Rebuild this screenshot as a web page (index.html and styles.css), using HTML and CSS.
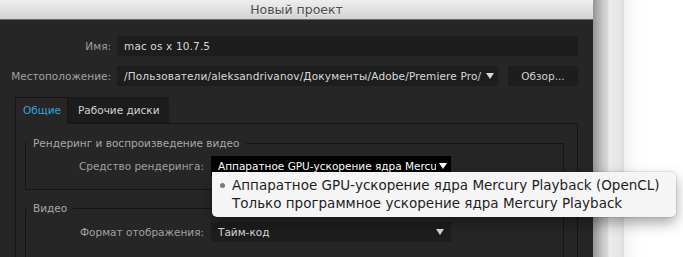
FILE: index.html
```html
<!DOCTYPE html>
<html lang="ru">
<head>
  <meta charset="UTF-8" />
  <title>Новый проект</title>
  <link rel="stylesheet" href="styles.css">
</head>
<body>
  <div class="screen">
    <div class="window">
      <div class="titlebar">Новый проект</div>
      <div class="dialog">
        <div class="row">
          <label class="field-label">Имя:</label>
          <div class="input input-name">mac os x 10.7.5</div>
        </div>
        <div class="row">
          <label class="field-label">Местоположение:</label>
          <div class="input input-path">
            <span class="clip">/Пользователи/aleksandrivanov/Документы/Adobe/Premiere Pro/</span>
            <span class="caret"></span>
          </div>
          <div class="button">Обзор...</div>
        </div>
        <div class="tabs">
          <div class="tab active">Общие</div>
          <div class="tab">Рабочие диски</div>
        </div>
        <div class="tab-panel">
          <fieldset class="group group-render">
            <legend>Рендеринг и воспроизведение видео</legend>
            <div class="group-row">
              <span class="group-label">Средство рендеринга:</span>
              <div class="select select-open">
                <span class="clip">Аппаратное GPU-ускорение ядра Mercury Playback (OpenCL)</span>
                <span class="caret caret-white"></span>
              </div>
            </div>
          </fieldset>
          <fieldset class="group group-video">
            <legend>Видео</legend>
            <div class="group-row">
              <span class="group-label">Формат отображения:</span>
              <div class="select">
                <span class="clip">Тайм-код</span>
                <span class="caret"></span>
              </div>
            </div>
          </fieldset>
        </div>
      </div>
      <div class="menu">
        <div class="menu-item checked">Аппаратное GPU-ускорение ядра Mercury Playback (OpenCL)</div>
        <div class="menu-item">Только программное ускорение ядра Mercury Playback</div>
      </div>
    </div>
    <div class="desktop"></div>
  </div>
</body>
</html>
```

FILE: styles.css
```css
* { box-sizing: border-box; margin: 0; padding: 0; }
html, body { width: 683px; height: 257px; overflow: hidden; }
body {
  font-family: 'DejaVu Sans', 'Liberation Sans', sans-serif;
  font-size: 10.5px;
  background: #fff;
}
.screen { display: flex; height: 257px; }
.window {
  position: relative;
  width: 593px; flex: none;
  display: flex; flex-direction: column;
}
.titlebar {
  height: 20px; flex: none;
  background: linear-gradient(#eeeeee, #d2d2d2);
  border-bottom: 1px solid #6b6b6b;
  border-top-right-radius: 4px;
  text-align: center; line-height: 19px;
  font-size: 12.5px; color: #4a4a4a;
  text-shadow: 0 1px 0 rgba(255,255,255,0.6);
}
.dialog {
  flex: 1;
  background: #262626;
  padding-top: 16px;
}
.row {
  display: flex; align-items: center; gap: 6px;
  height: 20px; margin-bottom: 10px;
  padding-right: 15px;
}
.field-label {
  width: 111px; flex: none;
  text-align: right; color: #a0a0a0;
}
.input {
  height: 20px; line-height: 20px;
  background: #1d1d1d; color: #dadada;
  padding: 0 7px;
  letter-spacing: 0.15px;
}
.input-name { flex: 1; }
.input-path {
  width: 381px; flex: none;
  display: flex; align-items: center;
  padding-right: 4px;
}
.clip { flex: 1; overflow: hidden; white-space: nowrap; }
.caret {
  flex: none; margin-left: 3px;
  width: 0; height: 0;
  border-left: 4.5px solid transparent;
  border-right: 4.5px solid transparent;
  border-top: 6px solid #d8d8d8;
}
.caret-white { border-top-color: #fff; }
.button {
  width: 70px; height: 20px; line-height: 20px;
  margin-left: 4px;
  background: #1d1d1d; color: #d0d0d0;
  text-align: center;
}
.tabs {
  display: flex; margin: 11px 15px 0;
  height: 26px; position: relative; z-index: 1;
}
.tab {
  line-height: 25px; padding: 0 9px 0 10px;
  color: #d4d4d4; background: #1c1c1c;
  border-top: 1px solid #1c1c1c;
}
.tab.active {
  width: 53px; padding: 0 7px;
  color: #36a3dc; background: #262626;
  border: 1px solid #151515; border-bottom: none;
  height: 27px;
}
.tab-panel {
  margin: 0 15px;
  height: 134px;
  border: 1px solid #151515; border-bottom: none;
}
.group {
  margin: 12px 13px 0 9px;
  border: 1px solid #151515;
  padding: 0;
}
.group legend {
  margin-left: 1px; padding: 0 6px;
  line-height: 14px; color: #a8a8a8;
}
.group-render { padding-bottom: 13px; }
.group-render .group-row { margin-top: 6px; }
.group-video { margin-top: 11px; border-bottom: none; height: 60px; }
.group-video .group-row { margin-top: 7px; }
.group-row { display: flex; align-items: center; gap: 7px; height: 20px; }
.group-label { width: 178px; text-align: right; color: #a0a0a0; }
.select {
  width: 240px; height: 20px;
  display: flex; align-items: center;
  padding: 0 7px; background: #1d1d1d; color: #dadada;
}
.select-open { background: #000; color: #fff; padding-right: 4px; }
.menu {
  position: absolute; left: 212px; top: 172px; z-index: 5;
  width: 464px; height: 45px;
  padding: 4px 0 0 20px;
  background: #f5f5f5;
  border-radius: 0 4px 5px 5px;
  box-shadow: 0 6px 14px rgba(0,0,0,0.35), 0 0 0 1px rgba(0,0,0,0.08);
  font-size: 13.5px; color: #1e1e1e;
}
.menu-item { line-height: 18px; position: relative; }
.menu-item.checked::before {
  content: ""; position: absolute;
  left: -12px; top: 7px;
  width: 5px; height: 5px; border-radius: 50%;
  background: #7a7a7a;
}
.desktop {
  flex: 1;
  background:
    linear-gradient(90deg, #939393 0, #c9c9c9 10px, #d9d9d9 15px, #ececec 16px, #e4e4e4 29px, #d2d2d2 30px, #f2f2f2 31px, #fdfdfd 45px, #ffffff 60px);
}
```
